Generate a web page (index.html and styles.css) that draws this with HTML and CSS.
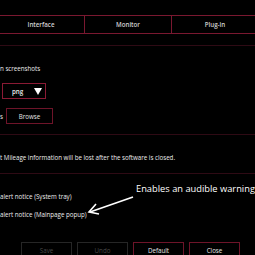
FILE: index.html
```html
<!DOCTYPE html>
<html lang="en">

<head>
    <title>settings</title>
    <meta charset="UTF-8">
    <link rel="stylesheet" href="styles.css">
</head>

<body>
    <div class="st-tabs">
        <div class="st-tab">Interface</div>
        <div class="st-tab">Monitor</div>
        <div class="st-tab">Plug-in</div>
    </div>
    <div class="st-rule"></div>

    <div class="st-label st-shots">n screenshots</div>
    <div class="st-select">
        <span>png</span>
        <span class="st-caret"></span>
    </div>
    <div class="st-row">
        <span class="st-label">s</span>
        <div class="st-btn">Browse</div>
    </div>

    <div class="st-rule st-rule-mid"></div>
    <div class="st-label st-note">t Mileage information will be lost after the software is closed.</div>
    <div class="st-rule st-rule-low"></div>

    <div class="st-label st-alert st-alert-first">alert notice (System tray)</div>
    <div class="st-label st-alert">alert notice (Mainpage popup)</div>

    <div class="st-actions">
        <div class="st-btn st-off">Save</div>
        <div class="st-btn st-off">Undo</div>
        <div class="st-btn">Default</div>
        <div class="st-btn">Close</div>
    </div>

    <!-- annotation laid over the screenshot -->
    <div class="st-callout">Enables an audible warning</div>
    <svg class="st-arrow" width="50" height="22" viewBox="0 0 50 22">
        <path d="M47 2 L4 17" stroke="#fff" stroke-width="1.6" fill="none" />
        <path d="M10 9 L3 17 L13 19" stroke="#fff" stroke-width="1.6" fill="none" />
    </svg>
</body>

</html>
```

FILE: styles.css
```css
* {
    box-sizing: border-box;
    font-family: 'Open Sans', sans-serif;
}

body {
    position: relative;
    margin: 0;
    width: 255px;
    height: 255px;
    overflow: hidden;
    background-color: #000000;
    color: #ececec;
}

.st-tabs {
    display: flex;
    margin: 15px 0 0 -2px;
    height: 19px;
    border-top: 1px solid #7a1830;
    border-bottom: 1px solid #7a1830;
}

.st-tab {
    flex: 0 0 87px;
    display: flex;
    align-items: center;
    justify-content: center;
    border-right: 1px solid #7a1830;
    font-size: 6.2px;
    font-weight: 600;
    color: #d0d0d0;
}

.st-rule {
    margin-top: 11px;
    border-top: 1px solid #2e0a14;
}

.st-label {
    font-size: 6.2px;
    line-height: 9px;
    white-space: nowrap;
}

.st-shots {
    margin-top: 18px;
}

.st-select {
    display: flex;
    align-items: center;
    justify-content: space-between;
    margin: 10px 0 0 2px;
    width: 44px;
    height: 16px;
    padding: 0 2px 0 9px;
    border: 1px solid #8a1a34;
    font-size: 6.2px;
    font-weight: 600;
}

.st-caret {
    width: 0;
    height: 0;
    border-left: 4px solid transparent;
    border-right: 4px solid transparent;
    border-top: 7px solid #ffffff;
    margin-right: 1px;
}

.st-row {
    display: flex;
    align-items: center;
    gap: 3px;
    margin-top: 9px;
}

.st-btn {
    display: flex;
    align-items: center;
    justify-content: center;
    width: 47px;
    height: 16px;
    border: 1px solid #6e1429;
    font-size: 6.2px;
    color: #e6e6e6;
}

.st-rule-mid {
    margin-top: 10px;
}

.st-note {
    margin-top: 18px;
}

.st-rule-low {
    margin-top: 11px;
}

.st-alert {
    margin-top: 9px;
}

.st-alert-first {
    margin-top: 18px;
}

.st-actions {
    display: flex;
    gap: 5px;
    margin: 23px 0 0 21px;
}

.st-actions .st-btn {
    width: 51px;
    height: 16px;
}

.st-actions .st-off {
    border-color: #262626;
    color: #4a4a4a;
}

.st-callout {
    position: absolute;
    left: 136px;
    top: 182px;
    font-size: 9.3px;
    white-space: nowrap;
    color: #ffffff;
}

.st-arrow {
    position: absolute;
    left: 86px;
    top: 195px;
}
```
